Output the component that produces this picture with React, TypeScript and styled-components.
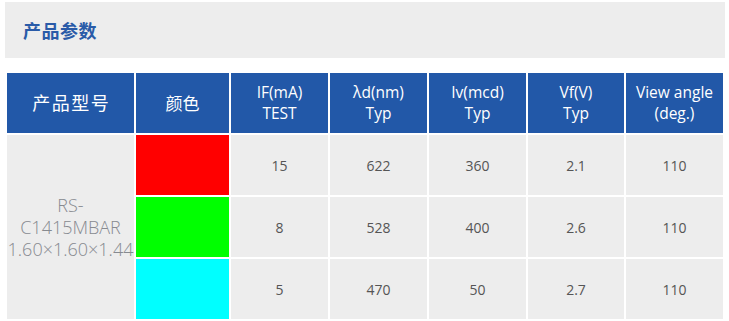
import React from "react";
import styled, { createGlobalStyle } from "styled-components";

const Global = createGlobalStyle`
  html, body { margin: 0; padding: 0; background: #ffffff; }
  body { font-family: "Segoe UI", "Open Sans", "Noto Sans CJK SC", sans-serif; }
`;

const Page = styled.div`
  padding: 2px 4px 0 5px;
  width: 720px;
`;

const TitleBar = styled.div`
  height: 56px;
  background: #ededed;
  display: flex;
  align-items: center;
  padding-left: 18px;
`;

const Title = styled.h2`
  margin: 0;
  font-family: "Noto Sans CJK SC", sans-serif;
  font-size: 18px;
  font-weight: 700;
  color: #2a5ba8;
  letter-spacing: 0.5px;
`;

const Table = styled.table`
  margin-top: 13px;
  width: 720px;
  border-collapse: separate;
  border-spacing: 2px;
  table-layout: fixed;
`;

const HeadCell = styled.th`
  height: 60px;
  padding: 0;
  background: #2258a8;
  color: #ffffff;
  font-family: "Open Sans", "Noto Sans CJK SC", sans-serif;
  font-size: 15.5px;
  font-weight: 400;
  line-height: 21px;
  text-align: center;
  vertical-align: middle;
`;

const CnHead = styled.span<{ $spread?: boolean }>`
  font-family: "Noto Sans CJK SC", sans-serif;
  font-size: ${(p) => (p.$spread ? "18px" : "17px")};
  letter-spacing: ${(p) => (p.$spread ? "1.5px" : "0")};
  margin-right: ${(p) => (p.$spread ? "-1.5px" : "0")};
`;

const BodyCell = styled.td<{ $swatch?: string }>`
  height: 60px;
  padding: 0;
  background: ${(p) => p.$swatch ?? "#ededed"};
  color: #555555;
  font-family: "Open Sans", "Noto Sans CJK SC", sans-serif;
  font-size: 14px;
  text-align: center;
  vertical-align: middle;
`;

const ModelCell = styled.td`
  padding: 0;
  background: #ededed;
  color: #878a90;
  font-family: "Open Sans", "Noto Sans CJK SC", sans-serif;
  font-weight: 300;
  font-size: 18px;
  line-height: 22px;
  text-align: center;
  vertical-align: middle;
  overflow: visible;
`;

const Line = styled.span`
  display: block;
  white-space: nowrap;
  margin: 0 -6px;
`;

const widths = [127, 93, 97, 97, 97, 96, 97];

const rows = [
  { color: "#ff0000", vals: ["15", "622", "360", "2.1", "110"] },
  { color: "#00ff00", vals: ["8", "528", "400", "2.6", "110"] },
  { color: "#00ffff", vals: ["5", "470", "50", "2.7", "110"] },
];

export default function App() {
  return (
    <>
      <Global />
      <Page>
        <TitleBar>
          <Title>产品参数</Title>
        </TitleBar>
        <Table>
          <colgroup>
            {widths.map((w, i) => (
              <col key={i} style={{ width: w }} />
            ))}
          </colgroup>
          <thead>
            <tr>
              <HeadCell><CnHead $spread>产品型号</CnHead></HeadCell>
              <HeadCell><CnHead>颜色</CnHead></HeadCell>
              <HeadCell>IF(mA)<br />TEST</HeadCell>
              <HeadCell>λd(nm)<br />Typ</HeadCell>
              <HeadCell>Iv(mcd)<br />Typ</HeadCell>
              <HeadCell>Vf(V)<br />Typ</HeadCell>
              <HeadCell>View angle<br />(deg.)</HeadCell>
            </tr>
          </thead>
          <tbody>
            {rows.map((r, i) => (
              <tr key={i}>
                {i === 0 && (
                  <ModelCell rowSpan={3}>
                    <Line>RS-</Line>
                    <Line>C1415MBAR</Line>
                    <Line>1.60×1.60×1.44</Line>
                  </ModelCell>
                )}
                <BodyCell $swatch={r.color} />
                {r.vals.map((v, j) => (
                  <BodyCell key={j}>{v}</BodyCell>
                ))}
              </tr>
            ))}
          </tbody>
        </Table>
      </Page>
    </>
  );
}
